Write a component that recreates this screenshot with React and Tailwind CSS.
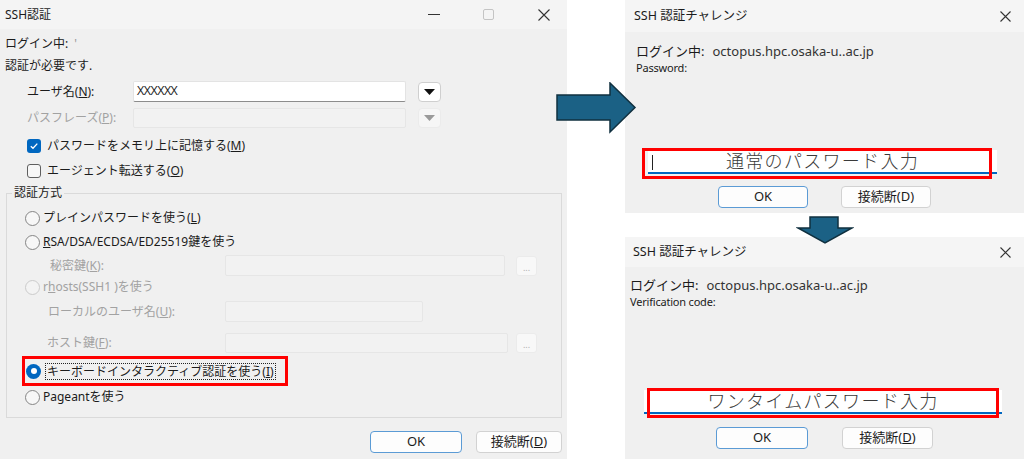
import React from 'react'

function Radio({ checked, disabled }) {
  if (checked) {
    return (
      <span className="w-[15px] h-[15px] rounded-full bg-[#0067c0] flex items-center justify-center shrink-0">
        <span className="w-[6px] h-[6px] rounded-full bg-white" />
      </span>
    )
  }
  return (
    <span
      className={
        disabled
          ? 'w-[15px] h-[15px] rounded-full border border-[#cbcbcb] bg-[#f3f3f3] shrink-0'
          : 'w-[15px] h-[15px] rounded-full border border-[#858585] bg-[#f7f7f7] shrink-0'
      }
    />
  )
}

function Checkbox({ checked }) {
  if (checked) {
    return (
      <span className="w-[14px] h-[14px] rounded-[3px] bg-[#0067c0] flex items-center justify-center shrink-0">
        <svg width="10" height="10" viewBox="0 0 10 10">
          <path d="M1.8 5.2 L4 7.3 L8.3 2.6" fill="none" stroke="white" strokeWidth="1.3" />
        </svg>
      </span>
    )
  }
  return <span className="w-[14px] h-[14px] rounded-[3px] border border-[#5f5f5f] bg-[#f7f7f7] shrink-0" />
}

function Tri({ color }) {
  return (
    <svg width="11" height="6" viewBox="0 0 11 6">
      <path d="M0 0 H11 L5.5 6 Z" fill={color} />
    </svg>
  )
}

function LeftDialog() {
  return (
    <div className="w-[567px] h-[459px] bg-[#f0f0f0] flex flex-col shrink-0 text-[12px] text-[#1b1b1b]">
      {/* Title bar */}
      <div className="h-[29px] bg-[#f4f4f4] flex items-center pl-[5px] shrink-0">
        <span>SSH認証</span>
        <div className="ml-auto flex items-center pr-[17px]">
          <span className="w-[12px] h-[1px] bg-[#333]" />
          <span className="ml-[43px] w-[11px] h-[11px] border border-[#c4c4c4] rounded-[2px]" />
          <svg className="ml-[44px]" width="12" height="12" viewBox="0 0 12 12">
            <path d="M0.5 0.5 L11.5 11.5 M11.5 0.5 L0.5 11.5" stroke="#333" strokeWidth="1.1" />
          </svg>
        </div>
      </div>

      <div className="h-[20px] mt-[5px] flex items-center pl-[5px]">ログイン中: <span className="ml-[6px] text-[#999]">'</span></div>
      <div className="h-[20px] mt-[2px] flex items-center pl-[5px]">認証が必要です.</div>

      {/* user name */}
      <div className="h-[21px] mt-[5px] flex items-center pl-[27px]">
        <span className="w-[106px]">ユーザ名(<u>N</u>):</span>
        <div className="w-[273px] h-full bg-white border border-[#e3e3e3] border-b-[#8c8c8c] rounded-[2px] flex items-center pl-[3px] font-['Open_Sans','Noto_Sans',sans-serif] text-[12.5px] tracking-[-0.5px]">XXXXXX</div>
        <div className="ml-[12px] w-[23px] h-[20px] bg-white border border-[#cfcfcf] rounded-[4px] flex items-center justify-center"><Tri color="#111" /></div>
      </div>

      {/* passphrase */}
      <div className="h-[20px] mt-[6px] flex items-center pl-[27px] text-[#a2a2a2]">
        <span className="w-[106px]">パスフレーズ(<u>P</u>):</span>
        <div className="w-[273px] h-full bg-[#f2f2f2] border border-[#e6e6e6] rounded-[2px]" />
        <div className="ml-[12px] w-[23px] h-[20px] bg-[#f6f6f6] border border-[#ebebeb] rounded-[4px] flex items-center justify-center"><Tri color="#9a9a9a" /></div>
      </div>

      <div className="h-[20px] mt-[8px] flex items-center pl-[27px] gap-[6px]">
        <Checkbox checked />
        <span>パスワードをメモリ上に記憶する(<u>M</u>)</span>
      </div>
      <div className="h-[20px] mt-[5px] flex items-center pl-[27px] gap-[6px]">
        <Checkbox />
        <span>エージェント転送する(<u>O</u>)</span>
      </div>

      {/* Group */}
      <fieldset className="mt-[4px] ml-[6px] w-[556px] border border-[#dadada] flex flex-col">
        <legend className="ml-[5px] px-[2px] leading-[16px]">認証方式</legend>

        <div className="h-[20px] mt-[7px] flex items-center pl-[18px] gap-[3px]">
          <Radio />
          <span>プレインパスワードを使う(<u>L</u>)</span>
        </div>
        <div className="h-[20px] mt-[4px] flex items-center pl-[18px] gap-[3px]">
          <Radio />
          <span><u>R</u>SA/DSA/ECDSA/ED25519鍵を使う</span>
        </div>
        <div className="h-[21px] mt-[3px] flex items-center pl-[43px] text-[#a2a2a2]">
          <span className="w-[175px]">秘密鍵(<u>K</u>):</span>
          <div className="w-[280px] h-full bg-[#f2f2f2] border border-[#e6e6e6] rounded-[2px]" />
          <div className="ml-[11px] w-[21px] h-[20px] bg-[#f8f8f8] border border-[#ebebeb] rounded-[3px] flex items-center justify-center text-[9px] text-[#b0b0b0] leading-none pt-[3px]">...</div>
        </div>
        <div className="h-[20px] mt-[1px] flex items-center pl-[18px] gap-[3px] text-[#a2a2a2]">
          <Radio disabled />
          <span>r<u>h</u>osts(SSH1 )を使う</span>
        </div>
        <div className="h-[21px] mt-[4px] flex items-center pl-[41px] text-[#a2a2a2]">
          <span className="w-[177px]">ローカルのユーザ名(<u>U</u>):</span>
          <div className="w-[198px] h-full bg-[#f2f2f2] border border-[#e6e6e6] rounded-[2px]" />
        </div>
        <div className="h-[20px] mt-[11px] flex items-center pl-[40px] text-[#a2a2a2]">
          <span className="w-[178px]">ホスト鍵(<u>F</u>):</span>
          <div className="w-[283px] h-full bg-[#f2f2f2] border border-[#e6e6e6] rounded-[2px]" />
          <div className="ml-[8px] w-[21px] h-[20px] bg-[#f8f8f8] border border-[#ebebeb] rounded-[3px] flex items-center justify-center text-[9px] text-[#b0b0b0] leading-none pt-[3px]">...</div>
        </div>

        <div className="mt-[3px] ml-[15px] w-[266px] h-[30px] border-[3px] border-[#ff0000] flex items-center pl-[1px] gap-[4px]">
          <Radio checked />
          <span className="border border-dotted border-[#222] leading-[15px] px-[1px]">キーボードインタラクティブ認証を使う(<u>I</u>)</span>
        </div>

        <div className="h-[20px] mt-[1px] mb-[10px] flex items-center pl-[18px] gap-[3px]">
          <Radio />
          <span>Pageantを使う</span>
        </div>
      </fieldset>

      {/* Buttons */}
      <div className="mt-[13px] h-[22px] flex pl-[370px] gap-[14px]">
        <div className="w-[92px] h-full bg-[#fdfdfd] border border-[#5b9bd5] rounded-[4px] flex items-center justify-center text-[13px]">OK</div>
        <div className="w-[86px] h-full bg-[#fdfdfd] border border-[#d2d2d2] rounded-[4px] flex items-center justify-center text-[13px]">接続断(<u>D</u>)</div>
      </div>
    </div>
  )
}

function ChallengeDialog({ prompt, hint, caret, variant }) {
  const top = variant === 'top'
  return (
    <div className={top ? 'w-[399px] h-[213px] bg-[#f0f0f0] flex flex-col text-[#1b1b1b]' : 'w-[399px] h-[222px] bg-[#f0f0f0] flex flex-col text-[#1b1b1b]'}>
      <div className={top ? 'h-[32px] bg-[#f5f5f5] flex items-center pl-[9px] pr-[13px] shrink-0' : 'h-[30px] bg-[#f5f5f5] flex items-center pl-[8px] pr-[13px] shrink-0'}>
        <span className="text-[12.5px]">SSH 認証チャレンジ</span>
        <svg className="ml-auto" width="11" height="11" viewBox="0 0 11 11">
          <path d="M0.5 0.5 L10.5 10.5 M10.5 0.5 L0.5 10.5" stroke="#333" strokeWidth="1.1" />
        </svg>
      </div>

      <div className={top ? 'h-[16px] mt-[12px] flex items-center pl-[11px] text-[13px]' : 'h-[16px] mt-[11px] flex items-center pl-[5px] text-[13px]'}>
        <span>ログイン中:</span>
        <span className="ml-[8px] text-[#333]">octopus.hpc.osaka-u..ac.jp</span>
      </div>
      <div className={top ? 'h-[12px] mt-[2px] flex items-center pl-[11px] text-[11px] tracking-[-0.2px]' : 'h-[12px] mt-[2px] flex items-center pl-[5px] text-[11px] tracking-[-0.2px]'}>{prompt}</div>

      <div className={top ? 'relative mt-[76px] ml-[23px] w-[349px] h-[24px]' : 'relative mt-[82px] ml-[19px] w-[358px] h-[24px]'}>
        <div className="w-full h-full bg-white border-b-2 border-[#0067c0] flex items-center justify-center text-[18px] font-light tracking-[1.3px] text-[#3a3a3a]">
          {hint}
        </div>
        {caret && <span className="absolute left-[4px] top-[5px] w-[1px] h-[15px] bg-[#222]" />}
        <div className={top ? 'absolute left-[-6px] top-[-2px] w-[350px] h-[31px] border-[3px] border-[#ff0000]' : 'absolute left-[3px] top-[-2px] w-[352px] h-[30px] border-[3px] border-[#ff0000]'} />
      </div>

      <div className={top ? 'mt-[12px] h-[22px] flex pl-[93px] gap-[33px] text-[13px]' : 'mt-[13px] h-[22px] flex pl-[91px] gap-[34px] text-[13px]'}>
        <div className={top ? 'w-[90px] h-full bg-[#fdfdfd] border border-[#5b9bd5] rounded-[4px] flex items-center justify-center' : 'w-[92px] h-full bg-[#fdfdfd] border border-[#5b9bd5] rounded-[4px] flex items-center justify-center'}>OK</div>
        <div className={top ? 'w-[90px] h-full bg-[#fdfdfd] border border-[#d2d2d2] rounded-[4px] flex items-center justify-center' : 'w-[91px] h-full bg-[#fdfdfd] border border-[#d2d2d2] rounded-[4px] flex items-center justify-center'}>
          {top ? <span>接続断(D)</span> : <span>接続断(<u>D</u>)</span>}
        </div>
      </div>
    </div>
  )
}

export default function App() {
  return (
    <div className="relative w-[1024px] h-[459px] bg-white flex overflow-hidden font-['Noto_Sans','Noto_Sans_CJK_JP',sans-serif]">
      <LeftDialog />
      <div className="ml-[58px] flex flex-col">
        <ChallengeDialog variant="top" prompt="Password:" hint="通常のパスワード入力" caret />
        <div className="mt-[24px]">
          <ChallengeDialog variant="bottom" prompt="Verification code:" hint="ワンタイムパスワード入力" />
        </div>
      </div>

      {/* Right arrow */}
      <svg className="absolute left-[556px] top-[82px]" width="81" height="52" viewBox="0 0 81 52">
        <polygon points="1,13 54,13 54,1 79,25.5 54,50 54,38 1,38" fill="#1b6185" stroke="#10303f" strokeWidth="1.5" strokeLinejoin="miter" />
      </svg>
      {/* Down arrow */}
      <svg className="absolute left-[796px] top-[214px]" width="58" height="31" viewBox="0 0 58 31">
        <polygon points="14,3 42,3 42,14 56,14 29,29 2,14 14,14" fill="#1b6185" stroke="#10303f" strokeWidth="1.5" />
      </svg>
    </div>
  )
}
